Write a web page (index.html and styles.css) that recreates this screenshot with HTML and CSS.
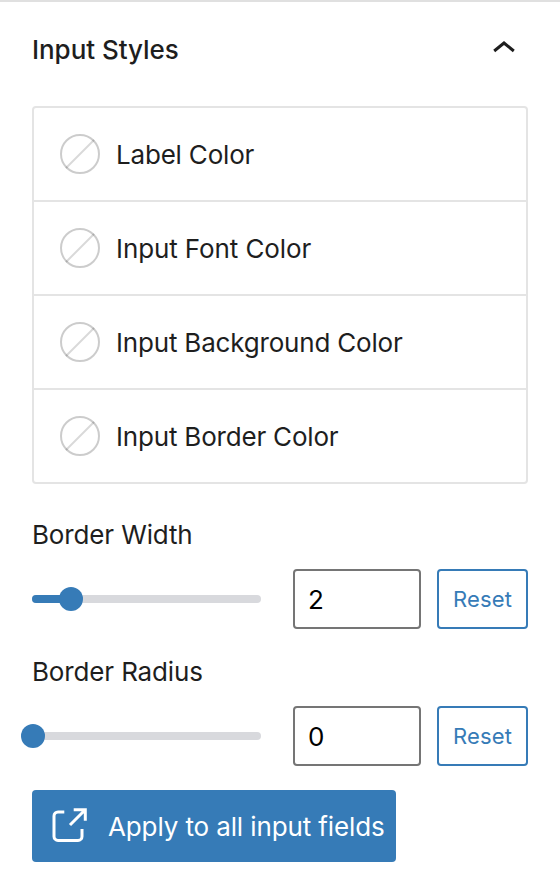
FILE: index.html
```html
<!DOCTYPE html>
<html lang="en">
<head>
<meta charset="utf-8">
<title>Input Styles</title>
<link rel="stylesheet" href="styles.css">
</head>
<body>
<section class="panel">
  <header class="panel-header">
    <h2>Input Styles</h2>
    <svg class="chevron" viewBox="0 0 48 48"><path d="M14.200 25 24 17l9.800 8"/></svg>
  </header>
  <ul class="colors">
    <li><svg class="swatch" viewBox="0 0 40 40"><circle cx="20" cy="20" r="19"/><path d="M6 34 34 6"/></svg><span class="name-short">Label Color</span></li>
    <li><svg class="swatch" viewBox="0 0 40 40"><circle cx="20" cy="20" r="19"/><path d="M6 34 34 6"/></svg><span class="name-font">Input Font Color</span></li>
    <li><svg class="swatch" viewBox="0 0 40 40"><circle cx="20" cy="20" r="19"/><path d="M6 34 34 6"/></svg><span>Input Background Color</span></li>
    <li><svg class="swatch" viewBox="0 0 40 40"><circle cx="20" cy="20" r="19"/><path d="M6 34 34 6"/></svg><span>Input Border Color</span></li>
  </ul>
  <div class="control">
    <div class="label">Border Width</div>
    <div class="row">
      <div class="track"><div class="fill" style="width: 39px"></div><div class="thumb"></div></div>
      <div class="number">2</div>
      <button class="reset">Reset</button>
    </div>
  </div>
  <div class="control">
    <div class="label">Border Radius</div>
    <div class="row">
      <div class="track"><div class="fill" style="width: 1px"></div><div class="thumb"></div></div>
      <div class="number">0</div>
      <button class="reset">Reset</button>
    </div>
  </div>
  <button class="apply">
    <svg viewBox="0 0 36 36"><path d="M13.300 4H7a4 4 0 0 0-4 4V28.400a4 4 0 0 0 4 4H27a4 4 0 0 0 4-4V21M19 17 34 2M22.700 1.700H34.300V12.700"/></svg>
    <span>Apply to all input fields</span>
  </button>
</section>
</body>
</html>
```
FILE: styles.css
```css
* { box-sizing: border-box; }
body {
  margin: 0;
  background: #fff;
  color: #1e1e1e;
  font: 26px/36px Inter, "Liberation Sans", sans-serif;
}
.panel {
  height: 892px;
  padding: 0 32px;
  border-top: 2px solid #e0e0e0;
}
.panel-header {
  display: flex;
  align-items: center;
  justify-content: space-between;
  height: 96px;
  margin-bottom: 8px;
}
h2 { margin: 0; font-size: 26px; font-weight: 550; letter-spacing: -0.05px; }
.chevron { width: 48px; height: 48px; fill: none; stroke: #1e1e1e; stroke-width: 3; }
.colors {
  margin: 0;
  padding: 0;
  list-style: none;
  border: 2px solid #e4e4e4;
  border-radius: 4px;
}
.colors li {
  display: flex;
  align-items: center;
  gap: 16px;
  height: 94px;
  padding: 0 26px;
  border-bottom: 2px solid #e4e4e4;
}
.colors li:last-child { height: 92px; border-bottom: 0; }
.colors span { padding-top: 2px; letter-spacing: -0.19px; }
.colors .name-font { letter-spacing: -0.1px; }
.swatch { width: 40px; height: 40px; fill: none; stroke-width: 2; }
.swatch circle { stroke: rgba(0, 0, 0, 0.2); }
.swatch path { stroke: rgba(0, 0, 0, 0.15); }
.control { height: 137px; padding-top: 33px; }
.label { letter-spacing: -0.14px; }
.row { display: flex; align-items: center; margin-top: 16px; }
.track {
  display: flex;
  align-items: center;
  width: 229px;
  height: 8px;
  margin-right: 32px;
  border-radius: 4px;
  background: #d8d9dd;
}
.fill { height: 8px; border-radius: 4px 0 0 4px; background: #367bb7; }
.thumb { flex: none; width: 24px; height: 24px; margin-left: -12px; border-radius: 50%; background: #367bb7; }
.number {
  width: 128px;
  height: 60px;
  margin-right: 16px;
  padding: 0 13px;
  border: 2px solid #757575;
  border-radius: 4px;
  color: #000;
  line-height: 58px;
}
.reset {
  width: 91px;
  height: 60px;
  padding: 0;
  border: 2px solid #367bb7;
  border-radius: 4px;
  background: #fff;
  color: #367bb7;
  font: 22px/1 Inter, sans-serif;
  letter-spacing: 0.15px;
}
.apply {
  display: flex;
  align-items: center;
  width: 364px;
  height: 72px;
  margin-top: 32px;
  padding: 0 0 0 19px;
  border: 0;
  border-radius: 4px;
  background: #367bb7;
  color: #fff;
  font: 26px/1 Inter, sans-serif;
  letter-spacing: -0.12px;
  white-space: nowrap;
}
.apply span { padding-top: 2px; }
.apply svg { flex: none; width: 36px; height: 36px; margin-right: 21px; fill: none; stroke: #fff; stroke-width: 3; }
```
